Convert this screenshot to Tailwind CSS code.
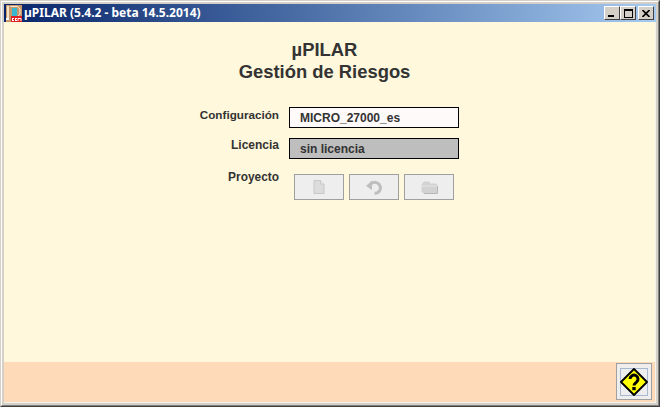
<!DOCTYPE html>
<html><head><meta charset="utf-8"><script src="https://cdn.jsdelivr.net/npm/@tailwindcss/browser@4"></script></head>
<body class="m-0 overflow-hidden">
<div class="w-[660px] h-[407px] bg-[#d4d0c8] border-t border-l border-t-[#d4d0c8] border-l-[#d4d0c8] border-r border-b border-r-[#404040] border-b-[#404040] font-['Liberation_Sans',sans-serif]">
<div class="w-full h-full flex flex-col border-t border-l border-t-white border-l-white border-r border-b border-r-[#808080] border-b-[#808080] pt-[2px] pl-[2px] pr-[2px] pb-[2px]">
  <div class="h-[18px] shrink-0 flex items-center bg-gradient-to-r from-[#0a246a] to-[#a6caf0]">
    <svg class="w-[16px] h-[17px] ml-[2px] shrink-0" viewBox="0 0 16 17">
      <rect width="16" height="17" fill="#c89868"/>
      <rect x="1" y="1" width="2" height="12" fill="#f4e4c8"/>
      <rect x="6" y="3" width="5" height="8" fill="#38b8d0"/>
      <path d="M4.500 1.500h7l2.500 2.500v5l-2.500 2.500H8V13" fill="none" stroke="#f4e8d8" stroke-width="1"/>
      <rect x="5" y="11" width="11" height="6" fill="#e02020"/>
      <rect x="0" y="13" width="3" height="2" fill="#fff"/>
      <path d="M6 13.500h2M6 15.500h2M6.500 13.500v2M9 13.500h2M9 15.500h2M9.500 13.500v2M12 16v-2.500h3V16" stroke="#fff" stroke-width="1" fill="none"/>
    </svg>
    <span class="ml-[2px] text-[12px] leading-none font-bold text-white font-['Noto_Sans',sans-serif] whitespace-nowrap">µPILAR (5.4.2 - beta 14.5.2014)</span>
    <div class="ml-auto mr-[2px] flex">
      <div class="w-[16px] h-[14px] bg-[#d4d0c8] border border-t-white border-l-white border-r-[#404040] border-b-[#404040] relative"><div class="absolute left-[3px] bottom-[2px] w-[6px] h-[2px] bg-black"></div></div>
      <div class="w-[16px] h-[14px] bg-[#d4d0c8] border border-t-white border-l-white border-r-[#404040] border-b-[#404040] flex items-center justify-center"><div class="w-[9px] h-[9px] border border-black border-t-2"></div></div>
      <div class="w-[16px] h-[14px] ml-[2px] bg-[#d4d0c8] border border-t-white border-l-white border-r-[#404040] border-b-[#404040] flex items-center justify-center"><svg class="w-[8px] h-[7px]" viewBox="0 0 8 7"><path d="M0.500 0l7 7M7.500 0l-7 7" stroke="#000" stroke-width="1.600"/></svg></div>
    </div>
  </div>
  <div class="flex-1 flex flex-col bg-[#fff8dc] border-r border-b border-[#f4f2ec]">
    <div class="flex-1 flex flex-col">
      <div class="w-[641px] pt-[17px] text-center text-[18.4px] leading-[22px] font-bold text-[#333333]">
        <div>µPILAR</div>
        <div>Gestión de Riesgos</div>
      </div>
      <div class="flex flex-col gap-[10px] mt-[24px]">
        <div class="flex items-center">
          <div class="w-[275px] text-right text-[11.7px] font-bold text-[#333333] -mt-[5px]">Configuración</div>
          <div class="ml-[10px] w-[170px] h-[21px] flex items-center pl-[10px] bg-[#fffafa] border border-black text-[12px] font-bold text-[#333333]">MICRO_27000_es</div>
        </div>
        <div class="flex items-center">
          <div class="w-[275px] text-right text-[12px] font-bold text-[#333333] -mt-[8px]">Licencia</div>
          <div class="ml-[10px] w-[170px] h-[21px] flex items-center pl-[10px] bg-[#bebebe] border border-black text-[12px] font-bold text-[#333333]">sin licencia</div>
        </div>
        <div class="flex items-start mt-[5px]">
          <div class="w-[275px] text-right text-[11.9px] font-bold text-[#333333] mt-[-5px]">Proyecto</div>
          <div class="ml-[15px] flex gap-[5px]">
            <div class="w-[50px] h-[26px] bg-[#eeeeee] border border-[#a0a0a0] flex items-center justify-center">
              <svg class="w-[12px] h-[14px]" viewBox="0 0 12 14"><path d="M1 0.500h6.500l3.500 3.500v9.500H1z" fill="#dcdcdc" stroke="#c8c8c8"/><path d="M7.500 0.500v3.500h3.500" fill="#eeeeee" stroke="#c8c8c8"/></svg>
            </div>
            <div class="w-[50px] h-[26px] bg-[#eeeeee] border border-[#a0a0a0] flex items-center justify-center">
              <svg class="w-[17px] h-[16px]" viewBox="0 0 17 16"><path d="M5.500 4.500a5.500 5.500 0 1 1 3 9.800" fill="none" stroke="#bebebe" stroke-width="3"/><path d="M0 7l6-5.500v9.500z" fill="#bebebe"/></svg>
            </div>
            <div class="w-[50px] h-[26px] bg-[#eeeeee] border border-[#a0a0a0] flex items-center justify-center">
              <svg class="w-[17px] h-[13px]" viewBox="0 0 17 13"><path d="M1 3L3 0.500h5L9.500 2.500h5.500L16.500 4v8.500H3L0.500 11V5z" fill="#d2d2d2"/><path d="M1 5h15" stroke="#e6e6e6"/><path d="M3 12.500h13.500V5" fill="none" stroke="#b8b8b8"/></svg>
            </div>
          </div>
        </div>
      </div>
    </div>
    <div class="h-[40px] shrink-0 flex items-start justify-end pt-[1px] bg-[#ffdab9]">
      <div class="w-[36px] h-[37px] mr-[3px] bg-[#eeeeee] border border-[#a0a0a0] flex items-center justify-center">
        <div class="w-[28px] h-[28px] border border-[#a8b8d0] flex items-center justify-center">
          <svg class="w-[28px] h-[28px] shrink-0" viewBox="0 0 28 28"><path d="M14 1L27 14 14 27 1 14z" fill="#ffff00" stroke="#000" stroke-width="1.800" stroke-linejoin="round"/><path d="M10 11a4 4 0 1 1 6.500 3.200c-1.300 1-2.500 1.600-2.500 3.300" fill="none" stroke="#000" stroke-width="3"/><rect x="12.300" y="19" width="3.400" height="3.200" fill="#000"/></svg>
        </div>
      </div>
    </div>
  </div>
</div>
</div>
</body></html>
